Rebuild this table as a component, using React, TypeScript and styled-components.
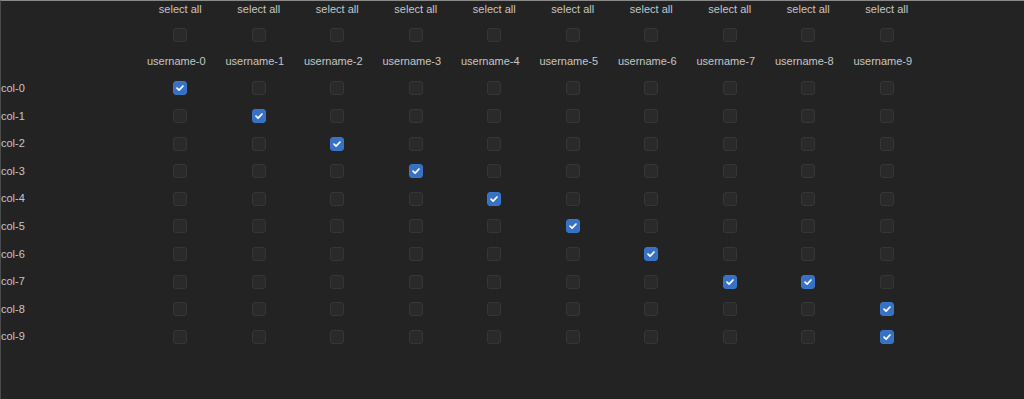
import styled, { createGlobalStyle } from "styled-components";
import { Fragment } from "react";

const GlobalStyle = createGlobalStyle`
	html, body {
		margin: 0;
		padding: 0;
		background: #232323;
	}
	body {
		font-family: "Liberation Sans", Arial, sans-serif;
		color: #c6c6c6;
	}
`;

const Page = styled.div`
	width: 1024px;
	height: 399px;
	box-sizing: border-box;
	border-top: 1px solid #8a8a8a;
	border-left: 1px solid #4c4c4c;
	background: #232323;
	overflow: hidden;
`;

const Grid = styled.div`
	display: grid;
	grid-template-columns: 140px repeat(10, 78.5px);
	grid-template-rows: 17px 34px 22.7px repeat(10, 27.6px);
	align-items: center;
	font-size: 11px;
`;

const Cell = styled.div<{ $left?: boolean }>`
	display: flex;
	align-items: center;
	justify-content: ${(p) => (p.$left ? "flex-start" : "center")};
	white-space: nowrap;
	line-height: 1;
`;

// username headers sit a little up and left of the boxes below them
const NameCell = styled(Cell)`
	padding: 0 8px 4px 0;
`;

const Box = styled.span<{ $checked?: boolean }>`
	width: 14px;
	height: 14px;
	box-sizing: border-box;
	border-radius: 3px;
	display: inline-flex;
	align-items: center;
	justify-content: center;
	background: ${(p) => (p.$checked ? "#3671c3" : "#2a2a2a")};
	border: 1px solid ${(p) => (p.$checked ? "#3a76ca" : "#363636")};
`;

const Checkbox = ({ checked }: { checked?: boolean }) => (
	<Box $checked={checked}>
		{checked && (
			<svg width="10" height="10" viewBox="0 0 10 10">
				<path
					d="M2 5.2 L4.1 7.2 L8 3"
					fill="none"
					stroke="#ffffff"
					strokeWidth="1.7"
					strokeLinecap="round"
					strokeLinejoin="round"
				/>
			</svg>
		)}
	</Box>
);

const users = Array.from({ length: 10 }, (_, i) => `username-${i}`);
const cols = Array.from({ length: 10 }, (_, i) => `col-${i}`);

// which user is ticked for each col
const picks: Record<number, number[]> = {
	0: [0],
	1: [1],
	2: [2],
	3: [3],
	4: [4],
	5: [5],
	6: [6],
	7: [7, 8],
	8: [9],
	9: [9],
};

const App = () => {
	return (
		<>
			<GlobalStyle />
			<Page>
				<Grid>
					<Cell />
					{users.map((u) => (
						<Cell key={"sa" + u}>select all</Cell>
					))}
					<Cell />
					{users.map((u) => (
						<Cell key={"sb" + u}>
							<Checkbox />
						</Cell>
					))}
					<Cell />
					{users.map((u) => (
						<NameCell key={u}>{u}</NameCell>
					))}
					{cols.map((c, r) => (
						<Fragment key={c}>
							<Cell $left>{c}</Cell>
							{users.map((u, i) => (
								<Cell key={c + u}>
									<Checkbox checked={picks[r].includes(i)} />
								</Cell>
							))}
						</Fragment>
					))}
				</Grid>
			</Page>
		</>
	);
};

export default App;
